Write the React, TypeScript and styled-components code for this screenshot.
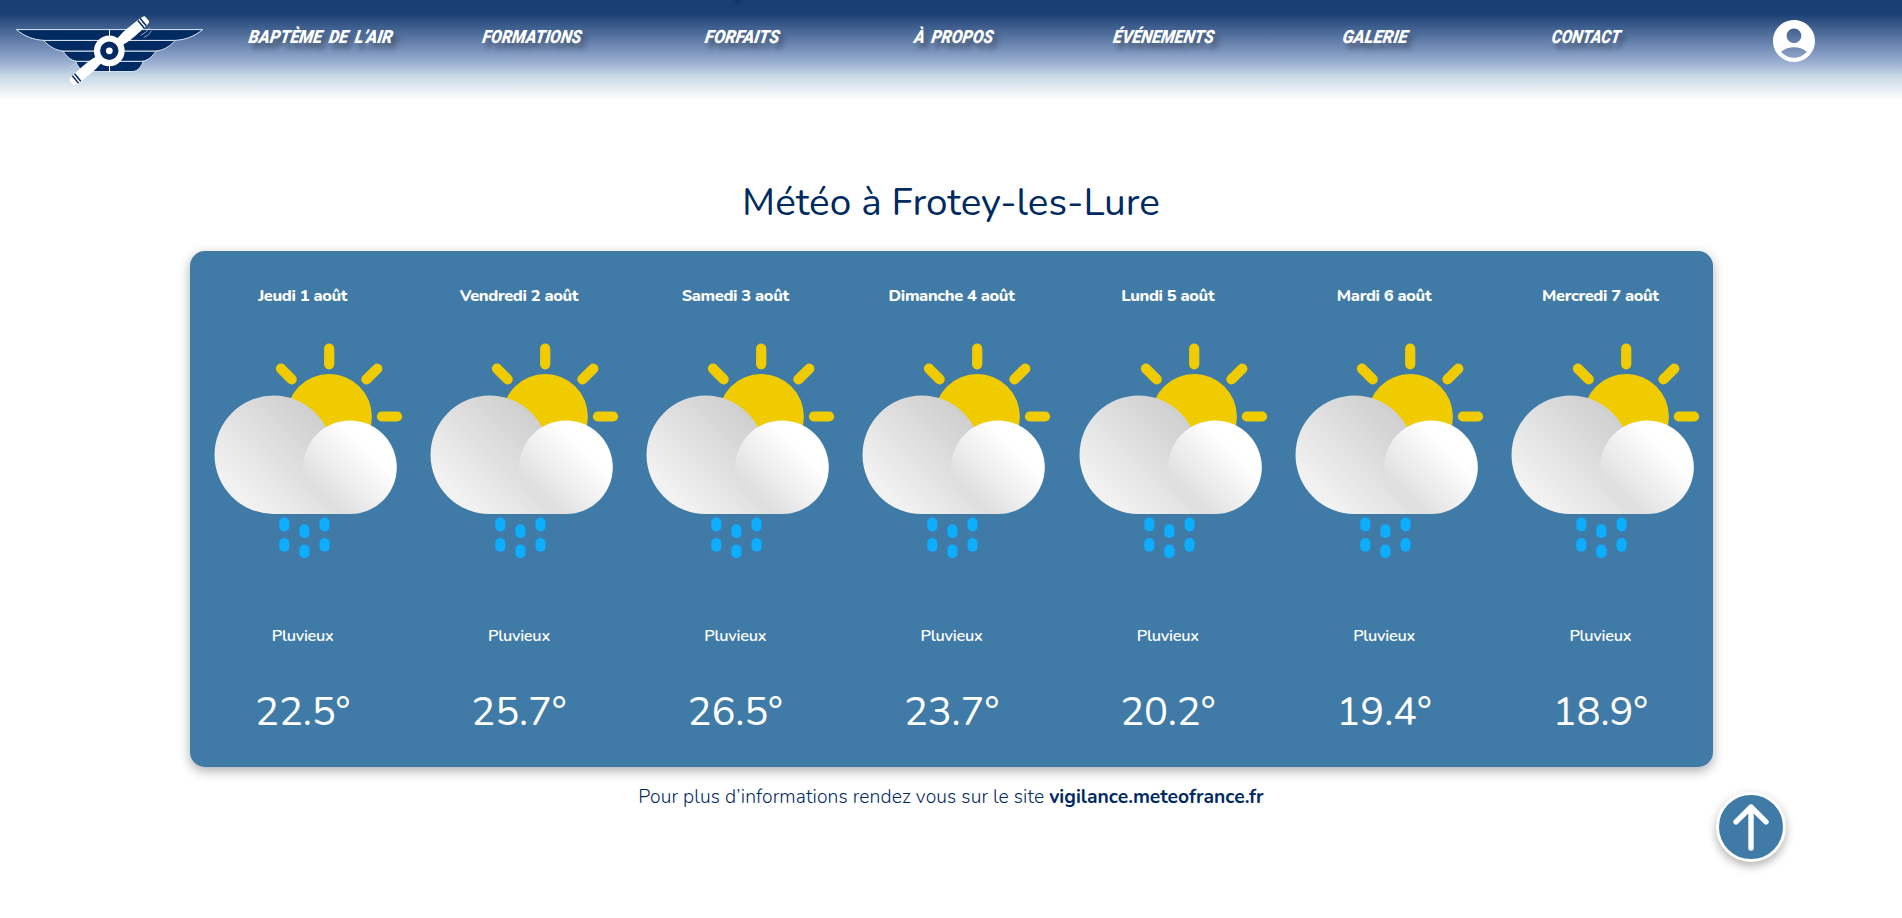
import React from "react";
import styled, { createGlobalStyle } from "styled-components";

const GlobalStyle = createGlobalStyle`
  * { box-sizing: border-box; }
  body {
    margin: 0;
    background: #fff;
    color: #002a62;
    font-family: Nunito, "Noto Sans", sans-serif;
    overflow: hidden;
  }
`;

const Page = styled.div`
  min-height: 918px;
  display: flex;
  flex-direction: column;
`;

const Header = styled.header`
  position: relative;
  height: 100px;
  display: flex;
  align-items: flex-start;
  background: linear-gradient(
    180deg,
    #1a3e72 0px,
    #1a3e72 13px,
    #859dc4 55px,
    #a5b8d6 66px,
    #c8d8e4 76px,
    #ffffff 100px
  );
`;

const LogoLink = styled.a`
  width: 215.5px;
  height: 100px;
  flex: none;
  svg { display: block; }
`;

const Nav = styled.nav`
  display: flex;
  width: 1476px;
  padding-top: 24px;
`;

const NavItem = styled.a`
  flex: 1;
  display: flex;
  justify-content: center;
`;

const NavLabel = styled.span<{ $fit: number }>`
  display: block;
  white-space: nowrap;
  color: #fff;
  font: italic 900 18.3px/26px Roboto, sans-serif;
  text-transform: uppercase;
  word-spacing: 3px;
  text-shadow: 6px 6px 6px rgba(0, 0, 0, 0.3);
  transform: scaleX(${(p) => p.$fit}) skewX(-10deg);
`;

const MenuPointer = styled.span`
  position: absolute;
  left: 734px;
  top: 0;
  border: 4px solid transparent;
  border-top: 5px solid #12356c;
  border-bottom: 0;
`;

const Account = styled.a`
  flex: 1;
  display: flex;
  justify-content: center;
  padding: 20px 5px 0 0;
`;

const Main = styled.main`
  display: flex;
  flex-direction: column;
  align-items: center;
  padding-top: 76px;
`;

const Title = styled.h1`
  margin: 0;
  height: 75px;
  font-size: 38.7px;
  line-height: 54px;
  font-weight: 400;
  white-space: nowrap;
`;

const Panel = styled.section`
  width: 1523px;
  height: 516px;
  padding: 0 4px 0 5px;
  border-radius: 15px;
  background: #407ba7;
  box-shadow: 0 4px 12px rgba(0, 0, 0, 0.32);
  display: flex;
`;

const Day = styled.article`
  flex: 1;
  display: flex;
  flex-direction: column;
  align-items: center;
  color: #fff;
`;

const DayName = styled.h2`
  margin: 33px 0 0;
  font-size: 16.4px;
  line-height: 24px;
  font-weight: 800;
  letter-spacing: -0.35px;
  white-space: nowrap;
`;

const Picture = styled.div`
  height: 232px;
  margin-top: 27px;
  svg { display: block; }
`;

const Condition = styled.p`
  margin: 57px 0 0;
  font-size: 16.3px;
  line-height: 24px;
  font-weight: 650;
  letter-spacing: -0.25px;
`;

const Temperature = styled.p`
  margin: 37px 0 0;
  font-size: 40px;
  line-height: 54px;
  font-weight: 450;
  letter-spacing: -0.15px;
`;

const Info = styled.p`
  margin: 17px 0 0;
  font-size: 19.3px;
  line-height: 26px;
  font-weight: 350;
  letter-spacing: 0.1px;
  white-space: nowrap;
  a { font-weight: 700; letter-spacing: 0; }
`;

const TopButton = styled.button`
  position: fixed;
  left: 1716px;
  top: 792px;
  width: 70px;
  height: 70px;
  padding: 0;
  border: 3px solid #fff;
  border-radius: 50%;
  background: #407ba7;
  box-shadow: 0 4px 10px rgba(0, 0, 0, 0.3);
  svg { display: block; }
`;

const Wing = () => (
  <g fill="#002a62" stroke="#dfe7f5" strokeWidth="1">
    <path d="M109.5 61.3H75.5C77.5 65 80 71.6 87 71.6H109.5Z" />
    <path d="M109.5 51H62.5C67 56 70 60.5 77 61.3H109.5Z" />
    <path d="M109.5 40.4H43.5C50 47 56 50.6 63.5 51H109.5Z" />
    <path d="M109.5 29.6H16.3C25 36.5 33 39.8 44.5 40.4H109.5Z" />
  </g>
);

const Blade = () => (
  <g>
    <path d="M-4 -12L-5.3 -22C-5.6 -32 -5 -42 -4.4 -47.5Q-4 -49.6 -2.5 -49.6H2.5Q4 -49.6 4.4 -47.5C5 -42 5.6 -32 5.3 -22L4 -12Z" fill="#fff" />
    <path d="M-4.8 -44.4H4.8M-4.8 -41.4H4.8" stroke="#002a62" strokeWidth="1.5" />
    <path d="M8.4 -46Q10.4 -40 8.4 -34M12 -45Q14 -40 12 -35" fill="none" stroke="#c5d2e8" strokeWidth=".7" />
  </g>
);

const Logo = () => (
  <svg width="215" height="100" viewBox="0 0 215 100">
    <Wing />
    <g transform="translate(219 0) scale(-1 1)"><Wing /></g>
    <path d="M109.5 30V72" stroke="#fff" />
    <g transform="translate(109.3 50.8) rotate(49.8)"><Blade /></g>
    <g transform="translate(109.3 50.8) rotate(229.8)"><Blade /></g>
    <circle cx="109.3" cy="50.8" r="12.3" fill="#002a62" stroke="#fff" strokeWidth="6.2" />
    <circle cx="109.3" cy="50.8" r="3.4" fill="#fff" />
  </svg>
);

const AccountIcon = () => (
  <svg width="42" height="42" viewBox="2 2 20 20" fill="#fff">
    <path d="M12 2C6.48 2 2 6.48 2 12s4.48 10 10 10 10-4.48 10-10S17.52 2 12 2zm0 4c1.93 0 3.5 1.57 3.5 3.5S13.93 13 12 13s-3.5-1.57-3.5-3.5S10.07 6 12 6zm0 14c-2.03 0-4.43-.82-6.14-2.88a9.947 9.947 0 0 1 12.28 0C16.43 19.18 14.03 20 12 20z" />
  </svg>
);

const drops = [
  [84.5, 182.3], [84.5, 202.7], [104.6, 189], [104.6, 209.2], [124.8, 182.3], [124.8, 202.7],
];

const RainIcon = ({ id }: { id: string }) => (
  <svg width="216" height="232" viewBox="0.3 -0.3 216 232">
    <defs>
      <linearGradient id={`back-${id}`} gradientUnits="userSpaceOnUse" x1="128" y1="72" x2="42" y2="158">
        <stop offset="0" stopColor="#cccccc" />
        <stop offset="1" stopColor="#f2f2f2" />
      </linearGradient>
      <linearGradient id={`front-${id}`} gradientUnits="userSpaceOnUse" x1="173" y1="114" x2="129" y2="158">
        <stop offset="0" stopColor="#ffffff" />
        <stop offset="1" stopColor="#e0e0e0" />
      </linearGradient>
    </defs>
    <circle cx="134.5" cy="81.4" r="42.7" fill="#f0cb00" />
    <path
      d="M134.5 13.4V29M187.2 81.2H202.4M86.3 33.3L97 44M182.6 33.3L171.7 44"
      stroke="#f0cb00"
      strokeWidth="10.2"
      strokeLinecap="round"
    />
    <path d="M79 60.3A59.2 59.2 0 0 0 79 178.7H155.3V119.5H138.2A59.2 59.2 0 0 0 79 60.3Z" fill={`url(#back-${id})`} />
    <circle cx="155.3" cy="132" r="46.8" fill={`url(#front-${id})`} />
    {drops.map(([x, y]) => (
      <rect key={`${x}-${y}`} x={x} y={y} width="10.2" height="13.8" rx="5.1" fill="#0dadff" />
    ))}
  </svg>
);

const links = [
  { label: "Baptème de l’air", fit: 0.9 },
  { label: "Formations", fit: 0.88 },
  { label: "Forfaits", fit: 0.92 },
  { label: "À propos", fit: 0.88 },
  { label: "Événements", fit: 0.885 },
  { label: "Galerie", fit: 0.925 },
  { label: "Contact", fit: 0.855 },
];

const days = [
  { name: "Jeudi 1 août", temperature: "22.5°" },
  { name: "Vendredi 2 août", temperature: "25.7°" },
  { name: "Samedi 3 août", temperature: "26.5°" },
  { name: "Dimanche 4 août", temperature: "23.7°" },
  { name: "Lundi 5 août", temperature: "20.2°" },
  { name: "Mardi 6 août", temperature: "19.4°" },
  { name: "Mercredi 7 août", temperature: "18.9°" },
];

export default function App() {
  return (
    <Page>
      <GlobalStyle />
      <Header>
        <LogoLink><Logo /></LogoLink>
        <Nav>
          {links.map((l) => (
            <NavItem key={l.label}><NavLabel $fit={l.fit}>{l.label}</NavLabel></NavItem>
          ))}
        </Nav>
        <Account><AccountIcon /></Account>
        <MenuPointer />
      </Header>
      <Main>
        <Title>Météo à Frotey-les-Lure</Title>
        <Panel>
          {days.map((d, i) => (
            <Day key={d.name}>
              <DayName>{d.name}</DayName>
              <Picture><RainIcon id={String(i)} /></Picture>
              <Condition>Pluvieux</Condition>
              <Temperature>{d.temperature}</Temperature>
            </Day>
          ))}
        </Panel>
        <Info>Pour plus d’informations rendez vous sur le site <a>vigilance.meteofrance.fr</a></Info>
      </Main>
      <TopButton aria-label="Haut de page">
        <svg width="64" height="64" viewBox="0 0 64 64" fill="none" stroke="#fff" strokeWidth="5.4" strokeLinecap="round" strokeLinejoin="round">
          <path d="M32 53V12M17 26.8L32 12L47 26.8" />
        </svg>
      </TopButton>
    </Page>
  );
}
